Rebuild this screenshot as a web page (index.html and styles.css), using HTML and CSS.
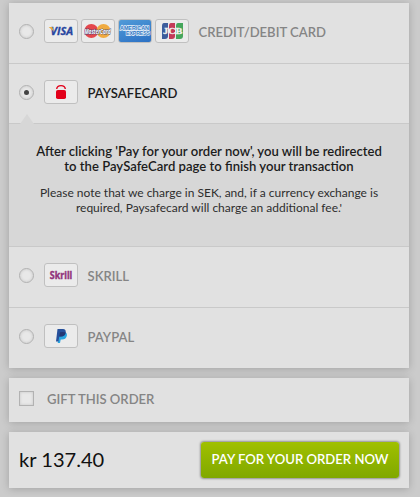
FILE: index.html
```html
<!DOCTYPE html>
<html lang="en">
<head>
  <meta charset="UTF-8">
  <meta name="viewport" content="width=device-width, initial-scale=1.0">
  <title>Checkout</title>
  <link rel="stylesheet" href="styles.css">
</head>
<body>
  <div class="checkout">
    <!-- Payment methods -->
    <div class="panel methods">
      <div class="method">
        <span class="radio"></span>
        <span class="logos">
          <span class="logo">
            <svg width="32" height="22" viewBox="0 0 32 22">
              <text class="visa" x="5.5" y="15" textLength="22.5" lengthAdjust="spacingAndGlyphs">VISA</text>
              <path d="M3.7 7h3.6l1.400 4.500z" fill="#e9a93c"/>
            </svg>
          </span>
          <span class="logo">
            <svg width="32" height="22" viewBox="0 0 32 22">
              <circle cx="9.3" cy="11" r="7" fill="#e5474d"/>
              <circle cx="21.5" cy="11" r="7" fill="#f0aa40"/>
              <text class="mastercard" x="2.5" y="13.5" textLength="26" lengthAdjust="spacingAndGlyphs">MasterCard</text>
            </svg>
          </span>
          <span class="logo amex">
            <svg width="32" height="22" viewBox="0 0 32 22">
              <text class="amex-text" x="1" y="10.3" textLength="29" lengthAdjust="spacingAndGlyphs">AMERICAN</text>
              <text class="amex-text" x="7" y="15.3" textLength="24" lengthAdjust="spacingAndGlyphs">EXPRESS</text>
            </svg>
          </span>
          <span class="logo">
            <svg width="32" height="22" viewBox="0 0 32 22">
              <path d="M8 3h4v13q0 3-3 3H6V6q0-3 2-3z" fill="#3d5d9c"/>
              <path d="M15 3h4v13q0 3-3 3h-3V6q0-3 2-3z" fill="#c33a58"/>
              <path d="M22 3h5v13q0 3-3 3h-4V6q0-3 2-3z" fill="#45a65c"/>
              <text class="jcb" x="7" y="14" textLength="19.5" lengthAdjust="spacingAndGlyphs">JCB</text>
            </svg>
          </span>
        </span>
        <span class="name">CREDIT/DEBIT CARD</span>
      </div>

      <div class="method selected">
        <span class="radio checked"></span>
        <span class="logos">
          <span class="logo">
            <svg width="32" height="22" viewBox="0 0 32 22">
              <rect x="11" y="9" width="10" height="9" rx="1.8" fill="#e2001a"/>
              <path d="M11.7 8C12.200 3.500 19.800 3.500 20.300 8" fill="none" stroke="#e2001a" stroke-width="1.4"/>
            </svg>
          </span>
        </span>
        <span class="name">PAYSAFECARD</span>
      </div>
      <div class="info">
        <p class="info-title">After clicking 'Pay for your order now', you will be redirected<br>to the PaySafeCard page to finish your transaction</p>
        <p class="info-note">Please note that we charge in SEK, and, if a currency exchange is<br>required, Paysafecard will charge an additional fee.'</p>
      </div>

      <div class="method">
        <span class="radio"></span>
        <span class="logos">
          <span class="logo">
            <svg width="32" height="22" viewBox="0 0 32 22">
              <text class="skrill" x="4.8" y="14.5" textLength="22.5" lengthAdjust="spacingAndGlyphs">Skrill</text>
            </svg>
          </span>
        </span>
        <span class="name">SKRILL</span>
      </div>

      <div class="method">
        <span class="radio"></span>
        <span class="logos">
          <span class="logo">
            <svg width="32" height="22" viewBox="0 0 32 22">
              <path d="M14.5 7H20q2.500 1 1.800 4-1 3.500-4.800 3.500h-1.300l-.7 3.500H12.700z" fill="#2ba5df"/>
              <path d="M12.500 4h5.500q3.200.2 2.700 3.500-.7 4-4.700 4h-1.700l-.8 5H11z" fill="#26509b"/>
              <path d="M15 7.300q3-.8 5.700.2-.7 4-4.700 4h-1.700z" fill="#243773"/>
            </svg>
          </span>
        </span>
        <span class="name">PAYPAL</span>
      </div>
    </div>

    <!-- Gift option -->
    <div class="panel gift">
      <span class="checkbox"></span>
      <span class="name">GIFT THIS ORDER</span>
    </div>

    <!-- Total and submit -->
    <div class="panel total">
      <span class="price">kr 137.40</span>
      <button class="pay-btn">PAY FOR YOUR ORDER NOW</button>
    </div>
  </div>
</body>
</html>
```
FILE: styles.css
```css
* {
  box-sizing: border-box;
}

body {
  margin: 0;
  height: 497px;
  background: #cbcbcb;
  font-family: Lato, sans-serif;
  overflow: hidden;
}

.checkout {
  display: flex;
  flex-direction: column;
  gap: 10px;
  width: 400px;
  margin: 3px 0 0 9px;
}

.panel {
  background: #e1e1e1;
  box-shadow: 0 1px 8px rgba(0, 0, 0, 0.2);
}

.method {
  display: flex;
  align-items: flex-start;
  height: 61px;
  padding: 16px 10px 0;
  border-bottom: 1px solid #c9c9c9;
}

.method.selected {
  height: 59px;
  border-bottom: none;
}

.method:last-child {
  height: 60px;
  border-bottom: none;
}

.radio {
  width: 15px;
  height: 15px;
  margin-top: 5px;
  border: 1px solid #b0b0b0;
  border-radius: 50%;
  background: #e8e8e8;
  box-shadow: inset 0 0 3px rgba(0, 0, 0, 0.15);
}

.radio.checked {
  display: flex;
  align-items: center;
  justify-content: center;
}

.radio.checked::after {
  content: "";
  width: 5px;
  height: 5px;
  border-radius: 50%;
  background: #444;
}

.logos {
  display: flex;
  gap: 3px;
  margin: 0 9px 0 10px;
}

.logo {
  width: 34px;
  height: 24px;
  border: 1px solid #c0c0c0;
  border-radius: 3px;
  background: #ebebeb;
}

.logo svg {
  display: block;
  overflow: visible;
}

.amex {
  background: linear-gradient(160deg, #519bd8, #2b70c4);
}

.visa {
  font: italic bold 11px "Open Sans", sans-serif;
  fill: #2746a0;
  stroke: #2746a0;
  stroke-width: 0.3px;
}

.mastercard {
  font: italic bold 6.5px "Open Sans", sans-serif;
  fill: #fff;
  stroke: #34467c;
  stroke-width: 0.8px;
  paint-order: stroke;
}

.amex-text {
  font: bold 5.5px "Liberation Sans", sans-serif;
  fill: #2e78c5;
  stroke: #e4eef7;
  stroke-width: 1.3px;
  paint-order: stroke;
}

.jcb {
  font: bold 8.5px "Liberation Serif", serif;
  fill: #f0f0f0;
  stroke: #f0f0f0;
  stroke-width: 0.3px;
}

.skrill {
  font: bold 10px "Open Sans", sans-serif;
  fill: #92357c;
  stroke: #92357c;
  stroke-width: 0.4px;
}

.name {
  margin-left: 0.5px;
  color: #858585;
  font-size: 13.07px;
  font-weight: 600;
  line-height: 24px;
  padding-top: 1px;
  white-space: nowrap;
}

.selected .name {
  color: #1c1c1c;
}

.info {
  position: relative;
  height: 124px;
  padding: 20px 0 0;
  border-top: 1px solid #c9c9c9;
  border-bottom: 1px solid #c9c9c9;
  background: #d7d7d7;
  text-align: center;
  white-space: nowrap;
}

/* arrow pointing at the selected method */
.info::before {
  content: "";
  position: absolute;
  left: 11px;
  top: -10px;
  border: 7px solid transparent;
  border-top: none;
  border-bottom: 10px solid #d7d7d7;
}

.info p {
  margin: 0;
  line-height: 15px;
  color: #1c1c1c;
}

.info .info-title {
  font-size: 13.1px;
  font-weight: 600;
}

.info .info-note {
  margin-top: 11px;
  font-size: 12px;
  color: #2e2e2e;
}

.gift {
  display: flex;
  align-items: flex-start;
  height: 44px;
  padding: 8px 10px 0;
}

.checkbox {
  width: 15px;
  height: 15px;
  margin: 5px 12.5px 0 0;
  border: 1px solid #b2b2b2;
  background: #e8e8e8;
  box-shadow: inset 0 0 3px rgba(0, 0, 0, 0.15);
}

.total {
  display: flex;
  align-items: center;
  justify-content: space-between;
  height: 56px;
  padding: 0 10px;
}

.price {
  padding-bottom: 2px;
  font-size: 20.1px;
  color: #111;
}

.pay-btn {
  width: 198px;
  height: 36px;
  padding: 0 0 3px;
  border: none;
  border-radius: 3px;
  background: linear-gradient(#a0c000, #80a800);
  box-shadow: 0 0 2px 1px rgba(0, 0, 0, 0.35);
  color: #fff;
  font: 600 13.1px Lato, sans-serif;
  white-space: nowrap;
  cursor: pointer;
}
```
